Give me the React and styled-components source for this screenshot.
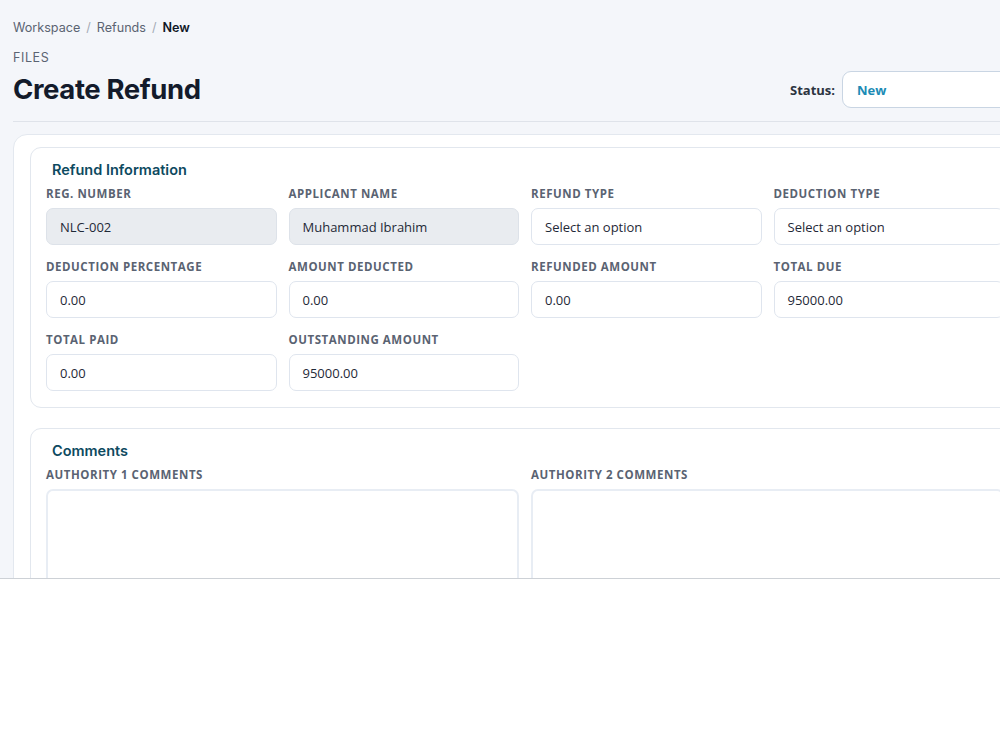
import styled, { createGlobalStyle } from "styled-components";

const GlobalStyle = createGlobalStyle`
* { box-sizing: border-box; }
body {
  margin: 0;
  background: #ffffff;
  overflow: hidden;
  font-family: "Open Sans", "Noto Sans", sans-serif;
}
`;

const Frame = styled.div`
height: 579px;
overflow: hidden;
background: #f4f6fa;
border-bottom: 1px solid #cdd1d6;
`;

const Page = styled.div`
width: 1050px;
padding: 19px 13px 0;
`;

const Crumbs = styled.div`
display: flex;
gap: 6px;
font-family: Inter, sans-serif;
font-size: 12.6px;
line-height: 18px;
color: #5b6472;
`;

const Sep = styled.span`
color: #a3aab5;
`;

const Current = styled.span`
color: #111827;
font-weight: 600;
`;

const HeaderRow = styled.div`
display: flex;
justify-content: space-between;
align-items: flex-end;
margin-top: 14px;
padding-bottom: 13px;
border-bottom: 1px solid #dfe3ea;
`;

const Overline = styled.div`
font-family: Inter, sans-serif;
font-size: 12.5px;
line-height: 14px;
letter-spacing: 0.6px;
color: #5b6472;
margin-bottom: 5px;
`;

const Title = styled.h1`
margin: 0;
font-family: Inter, sans-serif;
font-size: 27.5px;
line-height: 38px;
font-weight: 650;
letter-spacing: -0.4px;
color: #131b2b;
`;

const StatusWrap = styled.div`
display: flex;
align-items: center;
gap: 7px;
`;

const StatusLabel = styled.span`
font-size: 13px;
font-weight: 700;
color: #2b3340;
`;

const StatusBox = styled.div`
width: 195px;
height: 37px;
display: flex;
align-items: center;
padding: 0 14px;
background: #ffffff;
border: 1px solid #c9d5e3;
border-radius: 9px;
font-size: 13px;
font-weight: 700;
color: #1c8bb5;
`;

const OuterCard = styled.div`
margin-top: 12px;
background: #ffffff;
border: 1px solid #e3e8ef;
border-radius: 14px;
padding: 12px 16px 16px;
display: flex;
flex-direction: column;
gap: 20px;
`;

const Section = styled.div`
border: 1px solid #e2e7ee;
border-radius: 11px;
padding: 12px 15px 16px;
`;

const SectionTitle = styled.div`
font-family: Inter, sans-serif;
font-size: 14.5px;
line-height: 20px;
font-weight: 600;
color: #0d4a5f;
padding-left: 6px;
margin-bottom: 7px;
`;

const Grid = styled.div`
display: grid;
grid-template-columns: repeat(${(p) => p.cols}, 1fr);
column-gap: 12px;
row-gap: 15px;
`;

const Field = styled.div`
display: flex;
flex-direction: column;
gap: 7px;
`;

const Label = styled.div`
font-size: 11.5px;
line-height: 14px;
font-weight: 700;
letter-spacing: 0.55px;
text-transform: uppercase;
color: #5a6372;
`;

const Input = styled.div`
height: 37px;
display: flex;
align-items: center;
padding: 0 13px;
border: 1px solid ${(p) => (p.disabled ? "#dde2e9" : "#dfe5ee")};
background: ${(p) => (p.disabled ? "#e9ecf0" : "#ffffff")};
border-radius: 7px;
font-size: 13px;
color: #1f2937;
`;

const TextArea = styled.div`
height: 130px;
border: 2px solid #e8edf4;
border-radius: 7px;
background: #ffffff;
`;

const infoFields = [
  { label: "Reg. Number", value: "NLC-002", disabled: true },
  { label: "Applicant Name", value: "Muhammad Ibrahim", disabled: true },
  { label: "Refund Type", value: "Select an option" },
  { label: "Deduction Type", value: "Select an option" },
  { label: "Deduction Percentage", value: "0.00" },
  { label: "Amount Deducted", value: "0.00" },
  { label: "Refunded Amount", value: "0.00" },
  { label: "Total Due", value: "95000.00" },
  { label: "Total Paid", value: "0.00" },
  { label: "Outstanding Amount", value: "95000.00" },
];

const App = () => {
  return (
    <Frame>
      <GlobalStyle />
      <Page>
        <Crumbs>
          <span>Workspace</span>
          <Sep>/</Sep>
          <span>Refunds</span>
          <Sep>/</Sep>
          <Current>New</Current>
        </Crumbs>
        <HeaderRow>
          <div>
            <Overline>FILES</Overline>
            <Title>Create Refund</Title>
          </div>
          <StatusWrap>
            <StatusLabel>Status:</StatusLabel>
            <StatusBox>New</StatusBox>
          </StatusWrap>
        </HeaderRow>
        <OuterCard>
          <Section>
            <SectionTitle>Refund Information</SectionTitle>
            <Grid cols={4}>
              {infoFields.map((f) => (
                <Field key={f.label}>
                  <Label>{f.label}</Label>
                  <Input disabled={f.disabled}>{f.value}</Input>
                </Field>
              ))}
            </Grid>
          </Section>
          <Section>
            <SectionTitle>Comments</SectionTitle>
            <Grid cols={2}>
              <Field>
                <Label>Authority 1 Comments</Label>
                <TextArea />
              </Field>
              <Field>
                <Label>Authority 2 Comments</Label>
                <TextArea />
              </Field>
            </Grid>
          </Section>
        </OuterCard>
      </Page>
    </Frame>
  );
};

export default App;
